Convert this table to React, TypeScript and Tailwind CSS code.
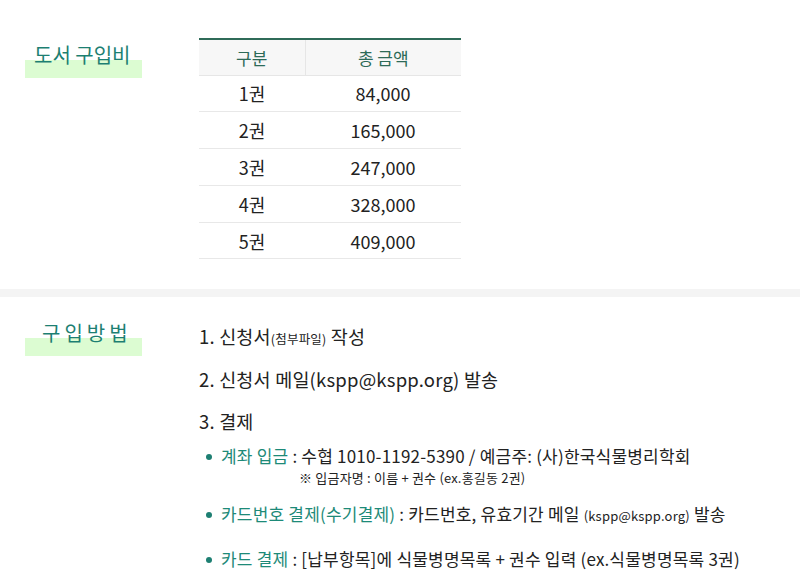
import React from "react";

const ROWS = [
  { qty: "1권", price: "84,000" },
  { qty: "2권", price: "165,000" },
  { qty: "3권", price: "247,000" },
  { qty: "4권", price: "328,000" },
  { qty: "5권", price: "409,000" },
];

function SectionTitle({ children, wide }: { children: React.ReactNode; wide?: boolean }) {
  return (
    <div className="relative w-[117px] ml-[25px] h-[36px]">
      <div className="absolute left-0 right-0 bottom-0 h-[18px] bg-[#dcfcd2]" />
      <h2
        className={`relative text-[20px] leading-[26px] text-[#1d7f72] whitespace-nowrap ${
          wide ? "pl-[17px] tracking-[4px]" : "pl-[9px]"
        }`}
      >
        {children}
      </h2>
    </div>
  );
}

export default function App() {
  return (
    <div className="w-[800px] min-h-[575px] bg-white text-[#222] font-['Noto_Sans_CJK_KR','Noto_Sans',sans-serif]">
      {/* 도서 구입비 */}
      <section className="flex pt-[38px] pb-[30px]">
        <div className="w-[199px] pt-[4px]">
          <SectionTitle>도서 구입비</SectionTitle>
        </div>
        <table className="w-[262px] border-collapse border-t-2 border-[#2f6b58]">
          <thead>
            <tr className="bg-[#f7f7f7] border-b border-[#e6e6e6]">
              <th className="w-[106px] h-[36px] font-normal text-[17px] text-[#2d6a57] border-r border-[#e6e6e6]">구분</th>
              <th className="h-[36px] font-normal text-[17px] text-[#2d6a57]">총 금액</th>
            </tr>
          </thead>
          <tbody>
            {ROWS.map((r) => (
              <tr key={r.qty} className="border-b border-[#e8e8e8]">
                <td className="h-[36.8px] text-center text-[18px] leading-none">{r.qty}</td>
                <td className="h-[36.8px] text-center text-[18px] leading-none">{r.price}</td>
              </tr>
            ))}
          </tbody>
        </table>
      </section>

      <div className="h-[8px] bg-[#f4f4f4]" />

      {/* 구입방법 */}
      <section className="flex pt-[21px]">
        <div className="w-[199px] pt-[2px]">
          <SectionTitle wide>구입방법</SectionTitle>
        </div>
        <div className="pt-[5px] tracking-[0.2px]">
          <p className="text-[18.5px] leading-[26px]">
            1. 신청서<span className="text-[12.5px] leading-none">(첨부파일)</span> 작성
          </p>
          <p className="text-[18.5px] leading-[26px] mt-[17px]">2. 신청서 메일(kspp@kspp.org) 발송</p>
          <p className="text-[18.5px] leading-[26px] mt-[16px]">3. 결제</p>
          <ul className="mt-[10px] pl-[7px] text-[17px]">
            <li className="flex items-start gap-[9px]">
              <span className="mt-[10px] w-[6px] h-[6px] rounded-full bg-[#1d7f72] shrink-0" />
              <div>
                <p className="leading-[24px]">
                  <span className="text-[#1d8a78]">계좌 입금</span> : 수협 1010-1192-5390 / 예금주: (사)한국식물병리학회
                </p>
                <p className="pl-[78px] mt-[1px] text-[13px] leading-[18px]">※ 입금자명 : 이름 + 권수 (ex.홍길동 2권)</p>
              </div>
            </li>
            <li className="flex items-start gap-[9px] mt-[15px]">
              <span className="mt-[10px] w-[6px] h-[6px] rounded-full bg-[#1d7f72] shrink-0" />
              <p className="leading-[24px]">
                <span className="text-[#1d8a78]">카드번호 결제(수기결제)</span> : 카드번호, 유효기간 메일{" "}
                <span className="text-[13px] leading-none">(kspp@kspp.org)</span> 발송
              </p>
            </li>
            <li className="flex items-start gap-[9px] mt-[21px]">
              <span className="mt-[10px] w-[6px] h-[6px] rounded-full bg-[#1d7f72] shrink-0" />
              <p className="leading-[24px] whitespace-nowrap">
                <span className="text-[#1d8a78]">카드 결제</span> : [납부항목]에 식물병명목록 + 권수 입력 (ex.식물병명목록 3권)
              </p>
            </li>
          </ul>
        </div>
      </section>
    </div>
  );
}
